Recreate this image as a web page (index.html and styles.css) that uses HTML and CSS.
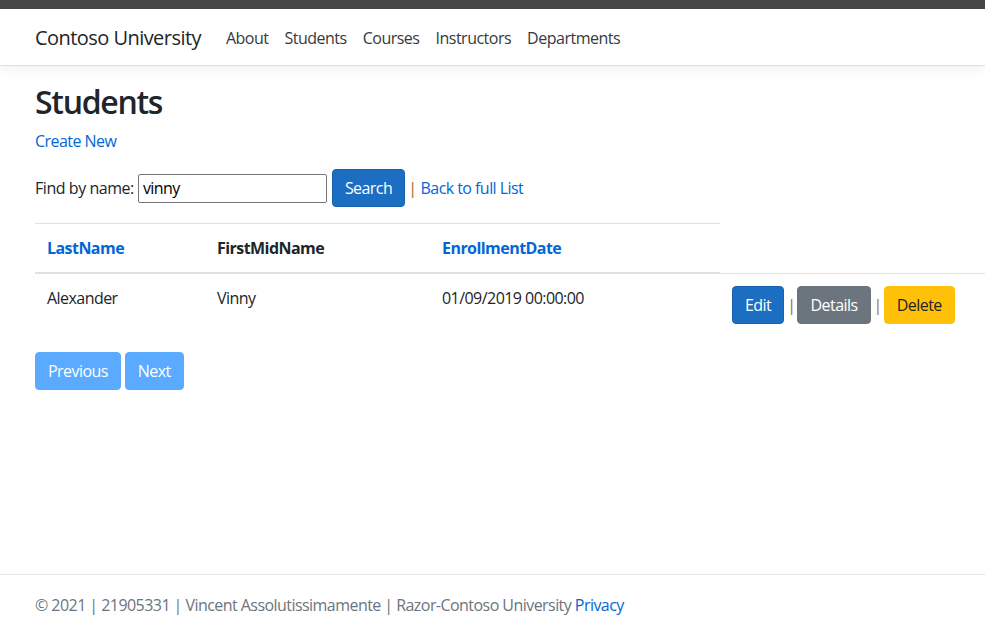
FILE: index.html
```html
<!DOCTYPE html>
<html lang="en">
<head>
<meta charset="utf-8">
<title>Students - Contoso University</title>
<link rel="stylesheet" href="styles.css">
</head>
<body>
<div class="topbar"></div>
<header class="navbar">
  <a class="brand" href="#">Contoso University</a>
  <nav class="nav">
    <a class="nav-link" href="#">About</a>
    <a class="nav-link" href="#">Students</a>
    <a class="nav-link" href="#">Courses</a>
    <a class="nav-link" href="#">Instructors</a>
    <a class="nav-link" href="#">Departments</a>
  </nav>
</header>
<main class="main">
  <h1 class="title">Students</h1>
  <p class="create"><a href="#">Create New</a></p>
  <form class="search-form">
    <span>Find by name:</span>
    <input class="search-input" type="text" value="vinny">
    <button class="btn btn-primary" type="button">Search</button>
    <span class="pipe">|</span>
    <a href="#">Back to full List</a>
  </form>
  <table class="table">
    <thead>
      <tr>
        <th class="c1"><a href="#">LastName</a></th>
        <th class="c2">FirstMidName</th>
        <th class="c3"><a href="#">EnrollmentDate</a></th>
      </tr>
    </thead>
    <tbody>
      <tr>
        <td>Alexander</td>
        <td>Vinny</td>
        <td>01/09/2019 00:00:00</td>
        <td class="c4">
          <div class="actions">
            <a class="btn btn-primary" href="#">Edit</a>
            <span class="pipe">|</span>
            <a class="btn btn-secondary" href="#">Details</a>
            <span class="pipe">|</span>
            <a class="btn btn-warning" href="#">Delete</a>
          </div>
        </td>
      </tr>
    </tbody>
  </table>
  <div class="pager">
    <a class="btn btn-disabled" href="#">Previous</a>
    <a class="btn btn-disabled" href="#">Next</a>
  </div>
</main>
<footer class="footer">
  &copy; 2021 | 21905331 | Vincent Assolutissimamente | Razor-Contoso University <a href="#">Privacy</a>
</footer>
</body>
</html>
```

FILE: styles.css
```css
html, body {
  margin: 0;
  padding: 0;
}
body {
  font-family: "Segoe UI", "Open Sans", "Noto Sans", sans-serif;
  font-size: 16px;
  line-height: 1.5;
  color: #212529;
  background: #fff;
  min-height: 631px;
  display: flex;
  flex-direction: column;
  letter-spacing: -0.55px;
}
a {
  color: #0366d6;
  text-decoration: none;
}
.topbar {
  height: 9px;
  background: #464646;
}
.navbar {
  display: flex;
  align-items: center;
  height: 54px;
  padding: 2px 35px 0;
  border-bottom: 1px solid #dedede;
  box-shadow: 0 4px 12px rgba(0, 0, 0, 0.05);
  background: #fff;
}
.brand {
  font-size: 20px;
  color: #212529;
  margin-right: 17px;
  line-height: 30px;
  letter-spacing: -0.55px;
}
.nav {
  display: flex;
}
.nav-link {
  color: #343a40;
  padding: 0 8px;
  letter-spacing: -0.5px;
}
.main {
  flex: 1;
  padding: 17px 35px 0;
}
.title {
  font-size: 32px;
  font-weight: 600;
  line-height: 38px;
  margin: 0 0 8px;
  letter-spacing: -1.3px;
}
.create {
  margin: 0 0 16px;
}
.search-form {
  display: flex;
  align-items: center;
  margin: 0 0 16px;
  height: 38px;
  white-space: pre;
}
.search-form > span:first-child {
  letter-spacing: -0.45px;
}
.search-input {
  width: 189px;
  height: 29px;
  box-sizing: border-box;
  border: 1px solid #767676;
  border-radius: 2px;
  padding: 1px 4px;
  margin: 0 5px 0 4px;
  font: inherit;
  letter-spacing: inherit;
  color: #000;
}
.pipe {
  color: #9a6a2c;
  margin: 0 2px 0 3px;
}
.search-form .pipe {
  margin: 0 4px 0 3px;
}
.btn {
  display: inline-block;
  box-sizing: border-box;
  height: 38px;
  line-height: 24px;
  padding: 6px 12px;
  border: 1px solid transparent;
  border-radius: 4px;
  font: inherit;
  letter-spacing: inherit;
  color: #fff;
  cursor: pointer;
}
.btn-primary {
  background: #1b6ec2;
  border-color: #1861ac;
}
.btn-secondary {
  background: #6c757d;
  border-color: #6c757d;
}
.btn-warning {
  background: #ffc107;
  border-color: #ffc107;
  color: #212529;
}
.btn-disabled {
  background: #5aaaff;
  border-color: #5aaaff;
}
.table {
  border-collapse: collapse;
  margin-bottom: 16px;
  width: 950px;
}
.table th,
.table td {
  padding: 12px;
  text-align: left;
  vertical-align: top;
}
.table th {
  border-top: 1px solid #dee2e6;
  border-bottom: 2px solid #dee2e6;
  font-weight: 700;
}
.table td {
  border-top: 1px solid #dee2e6;
}
.table .c1 { width: 146px; }
.table .c2 { width: 201px; }
.table .c3 { width: 266px; }
.actions {
  display: flex;
  align-items: center;
}
.pager {
  display: flex;
  gap: 4px;
}
.footer {
  border-top: 1px solid #e5e5e5;
  height: 56px;
  line-height: 60px;
  padding: 0 35px;
  color: #6c757d;
  white-space: nowrap;
}
```
